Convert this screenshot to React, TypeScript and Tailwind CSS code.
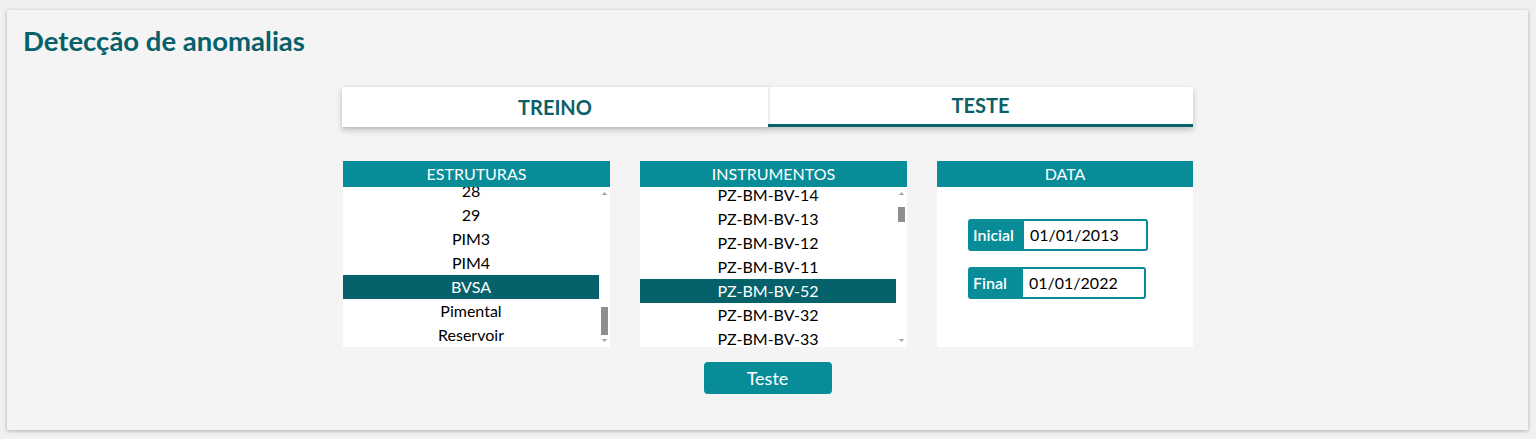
import React from "react";

const estruturas = ["28", "29", "PIM3", "PIM4", "BVSA", "Pimental", "Reservoir"];
const instrumentos = [
  "PZ-BM-BV-14",
  "PZ-BM-BV-13",
  "PZ-BM-BV-12",
  "PZ-BM-BV-11",
  "PZ-BM-BV-52",
  "PZ-BM-BV-32",
  "PZ-BM-BV-33",
];

function Scrollbar({ thumbTop, thumbHeight }: { thumbTop: number; thumbHeight: number }) {
  return (
    <div className="relative w-[11px] h-full bg-white shrink-0">
      <svg className="absolute left-[2px] top-[4px]" width="7" height="5" viewBox="0 0 7 5">
        <path d="M3.5 1 L6 4 L1 4 Z" fill="#a3a3a3" />
      </svg>
      <div
        className="absolute left-[2px] w-[7px] bg-[#8e8e8e]"
        style={{ top: thumbTop, height: thumbHeight }}
      />
      <svg className="absolute left-[2px] bottom-[4px]" width="7" height="5" viewBox="0 0 7 5">
        <path d="M1 1 L6 1 L3.5 4 Z" fill="#a3a3a3" />
      </svg>
    </div>
  );
}

function ListPanel({
  title,
  items,
  selected,
  offset,
  thumbTop,
  thumbHeight,
  width,
}: {
  title: string;
  items: string[];
  selected: string;
  offset: string;
  thumbTop: number;
  thumbHeight: number;
  width: string;
}) {
  return (
    <div className={`${width} flex flex-col`}>
      <div className="h-[26px] bg-[#078c98] text-white text-[16px] leading-[26px] text-center">
        {title}
      </div>
      <div className="h-[160px] bg-white flex overflow-hidden">
        <div className="flex-1 overflow-hidden">
          <div className={offset}>
            {items.map((it) => (
              <div
                key={it}
                className={`h-[24px] leading-[24px] text-center text-[16px] ${
                  it === selected ? "bg-[#05616a] text-white" : "text-black"
                }`}
              >
                {it}
              </div>
            ))}
          </div>
        </div>
        <Scrollbar thumbTop={thumbTop} thumbHeight={thumbHeight} />
      </div>
    </div>
  );
}

export default function App() {
  return (
    <div className="min-h-screen bg-[#f1f1f1] pt-[10px] pl-[7px] pr-[8px] font-['Lato',sans-serif]">
      <div className="bg-[#f4f4f4] shadow-[0_1px_4px_rgba(0,0,0,0.28)] pt-[13px] pb-[36px]">
        <h1 className="pl-[16px] text-[27.5px] leading-[36px] font-bold text-[#07606a]">
          Detecção de anomalias
        </h1>
        <div className="w-[851px] mx-auto mt-[28px]">
          <div className="flex h-[40px] shadow-[0_3px_6px_rgba(0,0,0,0.22)] bg-white">
            <div className="w-[426px] h-full flex items-center justify-center text-[20px] font-bold text-[#0b5f67] shadow-[1px_0_3px_rgba(0,0,0,0.12)]">
              TREINO
            </div>
            <div className="flex-1 h-full border-b-[3px] border-[#05616a] flex items-center justify-center text-[20px] font-bold text-[#0b5f67] pb-[2px]">
              TESTE
            </div>
          </div>
          <div className="flex gap-[30px] mt-[34px] pl-[1px]">
            <ListPanel
              title="ESTRUTURAS"
              items={estruturas}
              selected="BVSA"
              offset="-mt-[8px]"
              thumbTop={120}
              thumbHeight={28}
              width="w-[267px]"
            />
            <ListPanel
              title="INSTRUMENTOS"
              items={instrumentos}
              selected="PZ-BM-BV-52"
              offset="-mt-[4px]"
              thumbTop={20}
              thumbHeight={15}
              width="w-[267px]"
            />
            <div className="w-[256px] flex flex-col">
              <div className="h-[26px] bg-[#078c98] text-white text-[16px] leading-[26px] text-center">
                DATA
              </div>
              <div className="h-[160px] bg-white pt-[32px] pl-[31px] flex flex-col gap-[16px]">
                <div className="flex h-[32px]">
                  <div className="w-[54px] bg-[#078c98] rounded-l-[3px] text-white font-semibold text-[16px] leading-[32px] pl-[5px]">
                    Inicial
                  </div>
                  <div className="w-[126px] border-2 border-[#078c98] rounded-r-[3px] bg-white text-[16px] leading-[28px] pl-[6px] text-black">
                    01/01/2013
                  </div>
                </div>
                <div className="flex h-[32px]">
                  <div className="w-[53px] bg-[#078c98] rounded-l-[3px] text-white font-semibold text-[16px] leading-[32px] pl-[5px]">
                    Final
                  </div>
                  <div className="w-[125px] border-2 border-[#078c98] rounded-r-[3px] bg-white text-[16px] leading-[28px] pl-[6px] text-black">
                    01/01/2022
                  </div>
                </div>
              </div>
            </div>
          </div>
          <div className="flex justify-center mt-[15px]">
            <button className="w-[128px] h-[32px] bg-[#078c98] rounded-[4px] text-white text-[18px] leading-[32px]">
              Teste
            </button>
          </div>
        </div>
      </div>
    </div>
  );
}
